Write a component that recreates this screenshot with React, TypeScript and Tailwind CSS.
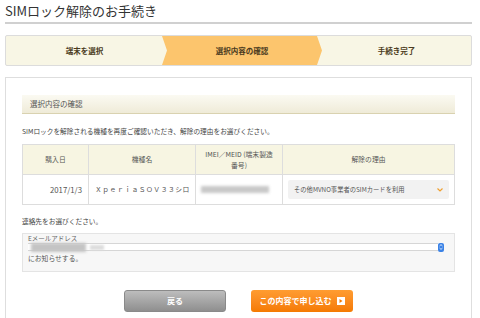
import React from "react";

const jp = { fontFamily: '"Noto Sans CJK JP", "Noto Sans", sans-serif' };

function Steps() {
  return (
    <div className="mx-[5px] mt-[11px] flex h-[31px] w-[467px] overflow-hidden rounded-[2px] border border-[#dcdcdc] bg-[#f8f6e5] text-[7.5px] font-bold text-[#4a3a20]">
      <div className="flex w-[157px] items-center justify-center">端末を選択</div>
      <div className="-ml-[1px] flex w-[160px] items-center justify-center bg-[#fcc56d] [clip-path:polygon(0_0,155px_0,160px_50%,155px_100%,0_100%,5px_50%)]">
        選択内容の確認
      </div>
      <div className="flex flex-1 items-center justify-center">手続き完了</div>
    </div>
  );
}

function Table() {
  return (
    <table className="mt-[8px] w-[433px] border-collapse text-[6.8px] text-[#555]">
      <thead>
        <tr className="h-[30px] bg-[#f7f5e2]">
          <th className="w-[66px] border border-[#ddd] font-normal">購入日</th>
          <th className="w-[107px] border border-[#ddd] font-normal">機種名</th>
          <th className="w-[87px] border border-[#ddd] px-[6px] font-normal leading-[11px]">IMEI／MEID (端末製造番号)</th>
          <th className="border border-[#ddd] font-normal">解除の理由</th>
        </tr>
      </thead>
      <tbody>
        <tr className="h-[30px]">
          <td className="border border-[#ddd] pr-[6px] text-right text-[7.8px]">2017/1/3</td>
          <td className="border border-[#ddd] pl-[6px] tracking-[0.5px]">ＸｐｅｒｉａＳＯＶ３３シロ</td>
          <td className="border border-[#ddd] px-[5px]">
            <div className="h-[7px] w-[68px] bg-[#c8c8c8] blur-[1.5px]" />
          </td>
          <td className="border border-[#ddd] px-[5px]">
            <div className="flex h-[19px] items-center justify-between rounded-[2px] bg-[#f2f2f2] px-[6px] text-[6.3px] text-[#555]">
              <span>その他MVNO事業者のSIMカードを利用</span>
              <svg width="6" height="4" viewBox="0 0 6 4">
                <path d="M0.5 0.5 L3 3 L5.5 0.5" stroke="#f0a030" strokeWidth="1.2" fill="none" />
              </svg>
            </div>
          </td>
        </tr>
      </tbody>
    </table>
  );
}

function Contact() {
  return (
    <div className="mt-[7px] h-[39px] w-[433px] border border-[#e4e4e4] bg-[#f7f7f7] px-[5px]">
      <div className="h-[8px] text-[6.5px] leading-[8px] text-[#666]">Eメールアドレス</div>
      <div className="flex h-[10px] items-center">
        <div className="flex h-[8px] flex-1 items-center border-y border-[#d6d6d6] bg-white">
          <div className="ml-[3px] h-[9px] w-[55px] bg-[#c4c4c4] blur-[1.5px]" />
          <div className="ml-[4px] h-[5px] w-[14px] bg-[#dddddd] blur-[1px]" />
        </div>
        <div className="flex h-[9px] w-[6px] items-center justify-center rounded-[2px] bg-[#3b82e6]">
          <svg width="4" height="6" viewBox="0 0 4 6">
            <path d="M0.5 2 L2 0.6 L3.5 2 M0.5 4 L2 5.4 L3.5 4" stroke="white" strokeWidth="0.8" fill="none" />
          </svg>
        </div>
        <div className="w-[5px]" />
      </div>
      <div className="mt-[2px] text-[6.8px] leading-[9px] text-[#555]">にお知らせする。</div>
    </div>
  );
}

export default function App() {
  return (
    <div className="h-[318px] w-[480px] overflow-hidden bg-white" style={jp}>
      <div className="mx-[5px] w-[467px] border-b-2 border-[#d0d0d0] pb-[2px] pt-[2px] text-[13px] leading-[18px] text-[#333]">
        SIMロック解除のお手続き
      </div>
      <Steps />
      <div className="mx-[5px] mt-[11px] h-[300px] w-[467px] border border-[#dedede] px-[16px] pt-[17px]">
        <div className="flex h-[19px] items-center border-b border-[#d9d2b0] bg-gradient-to-b from-[#fbfaf2] to-[#efebd8] pl-[8px] text-[7.5px] text-[#555]">
          選択内容の確認
        </div>
        <div className="mt-[13px] text-[6.7px] leading-[9px] text-[#444]">
          SIMロックを解除される機種を再度ご確認いただき、解除の理由をお選びください。
        </div>
        <Table />
        <div className="mt-[12px] text-[6.7px] leading-[9px] text-[#444]">連絡先をお選びください。</div>
        <Contact />
        <div className="mt-[18px] flex justify-center gap-[25px]">
          <div className="flex h-[22px] w-[102px] items-center justify-center rounded-[3px] border border-[#8a8a8a] bg-gradient-to-b from-[#bdbdbd] to-[#8f8f8f] text-[8px] font-bold text-white">
            戻る
          </div>
          <div className="flex h-[22px] w-[102px] items-center justify-center gap-[5px] rounded-[3px] bg-gradient-to-b from-[#ff9c30] to-[#f57a00] text-[8px] font-bold text-white">
            この内容で申し込む
            <span className="flex h-[8px] w-[8px] items-center justify-center bg-white">
              <svg width="4" height="4" viewBox="0 0 4 4">
                <path d="M0.5 0 L3.5 2 L0.5 4 Z" fill="#f57a00" />
              </svg>
            </span>
          </div>
        </div>
      </div>
    </div>
  );
}
